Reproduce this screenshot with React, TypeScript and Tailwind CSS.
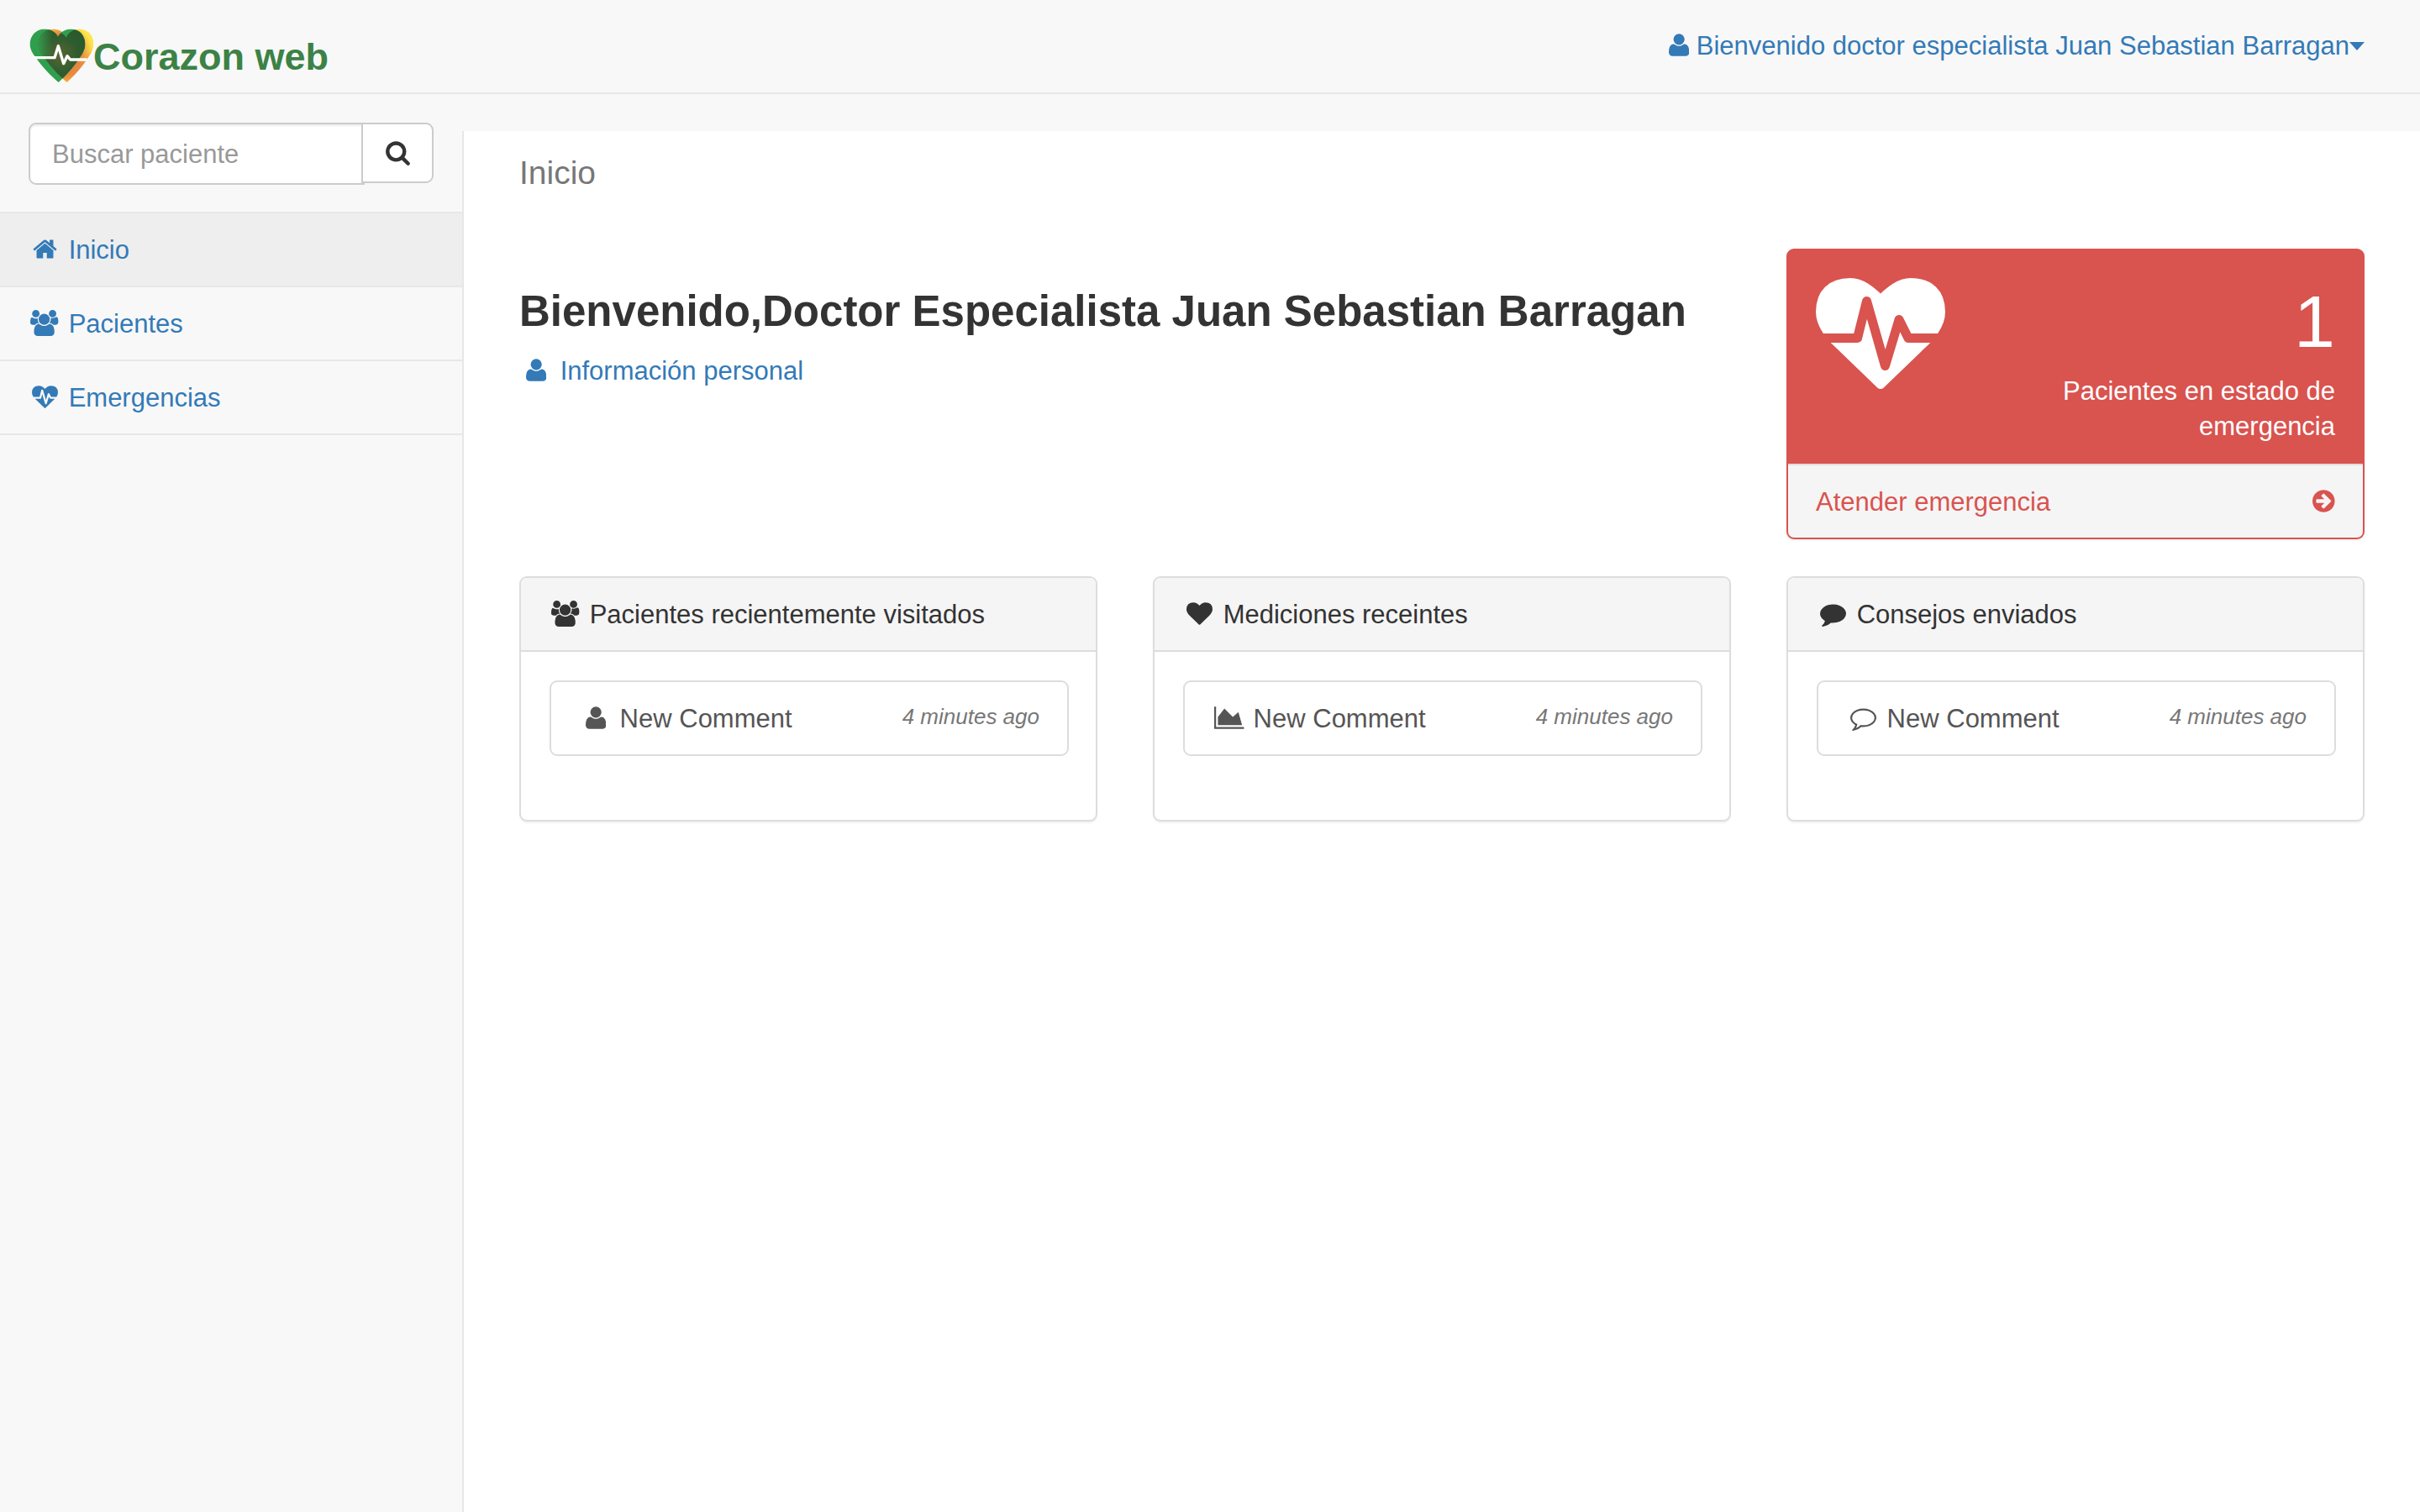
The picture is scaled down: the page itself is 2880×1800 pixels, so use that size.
import type { ReactNode } from "react";

type IconProps = { size?: string };

type GlyphProps = { width: number; d: string; size?: string; flip?: boolean };

function Glyph({ width, d, size = "h-[31px] align-[-4px]", flip }: GlyphProps) {
  return (
    <svg
      viewBox={`0 0 ${width} 1792`}
      className={`inline-block w-auto fill-current ${size}`}
      aria-hidden="true"
    >
      <path d={d} transform={flip ? "translate(0 1536) scale(1 -1)" : undefined} />
    </svg>
  );
}

function UserIcon() {
  return (
    <Glyph
      width={1408}
      flip
      d="M1408 131q0-120-73-189.5t-194-69.5h-874q-121 0-194 69.5t-73 189.5q0 53 3.5 103.5t14 109t26.5 108.5t43 97.5t62 81t85.5 53.5t111.5 20q9 0 42-21.5t74.5-48t108-48t133.5-21.5t133.5 21.5t108 48t74.5 48t42 21.5q61 0 111.5-20t85.5-53.5t62-81t43-97.5t26.5-108.5t14-109t3.5-103.5zM1088 1024q0-159-112.5-271.5t-271.5-112.5t-271.5 112.5t-112.5 271.5t112.5 271.5t271.5 112.5t271.5-112.5t112.5-271.5z"
    />
  );
}

function HomeIcon() {
  return (
    <Glyph
      width={1792}
      d="M1472 992v480q0 26-19 45t-45 19h-384v-384h-256v384h-384q-26 0-45-19t-19-45v-480q0-1 .5-3t.5-3l575-474 575 474q1 2 1 6zm223-69l-62 74q-8 9-21 11h-3q-13 0-21-7l-692-577-692 577q-12 8-24 7-13-2-21-11l-62-74q-8-10-7-23.5t11-21.5l719-599q32-26 76-26t76 26l244 204v-195q0-14 9-23t23-9h192q14 0 23 9t9 23v408l219 182q10 8 11 21.5t-7 23.5z"
    />
  );
}

function UsersIcon() {
  return (
    <Glyph
      width={1920}
      d="M593 896q-162 5-265 128h-134q-82 0-138-40.5t-56-118.5q0-353 124-353 6 0 43.5 21t97.5 42.5 119 21.5q67 0 133-23-5 37-5 66 0 159 93 293zm1071 637q0 120-73 189.5t-194 69.5h-874q-121 0-194-69.5t-73-189.5q0-53 3.5-103.5t14-109 26.5-108.5 43-97.5 62-81 85.5-53.5 111.5-20q10 0 43 21.5t73 48 107 48 135 21.5 135-21.5 107-48 73-48 43-21.5q61 0 111.5 20t85.5 53.5 62 81 43 97.5 26.5 108.5 14 109 3.5 103.5zm-1024-1277q0 106-75 181t-181 75-181-75-75-181 75-181 181-75 181 75 75 181zm704 384q0 159-112.5 271.5t-271.5 112.5-271.5-112.5-112.5-271.5 112.5-271.5 271.5-112.5 271.5 112.5 112.5 271.5zm576 225q0 78-56 118.5t-138 40.5h-134q-103-123-265-128 93-134 93-293 0-29-5-66 66 23 133 23 59 0 119-21.5t97.5-42.5 43.5-21q124 0 124 353zm-128-609q0 106-75 181t-181 75-181-75-75-181 75-181 181-75 181 75 75 181z"
    />
  );
}

function HeartbeatIcon({ size }: IconProps) {
  return (
    <Glyph
      width={1792}
      size={size}
      d="M1280 1024h305q-5 6-10 10.5t-9 7.5l-3 4-623 600q-18 18-44 18t-44-18l-624-602q-5-2-21-20h369q22 0 39.5-13.5t22.5-34.5l70-281 190 667q6 20 23 33t39 13q21 0 38-13t23-33l146-485 56 112q18 35 57 35zm512-428q0 145-103 300h-369l-111-221q-8-17-25.5-27t-36.5-8q-45 5-56 46l-129 430-196-686q-6-20-23.5-33t-39.5-13-39 13.5-22 34.5l-116 464h-423q-103-155-103-300 0-220 127-344t351-124q62 0 126.5 21.5t120 58 95.5 68.5 76 68q36-36 76-68t95.5-68.5 120-58 126.5-21.5q224 0 351 124t127 344z"
    />
  );
}

function HeartIcon() {
  return (
    <Glyph
      width={1792}
      d="M896 1664q-26 0-44-18l-624-602q-10-8-27.5-26t-55.5-65.5-68-97.5-53.5-121-23.5-138q0-220 127-344t351-124q62 0 126.5 21.5t120 58 95.5 68.5 76 68q36-36 76-68t95.5-68.5 120-58 126.5-21.5q224 0 351 124t127 344q0 221-229 450l-623 600q-18 18-44 18z"
    />
  );
}

function SearchIcon() {
  return (
    <Glyph
      width={1792}
      size="h-[31px]"
      d="M1216 832q0-185-131.5-316.5t-316.5-131.5-316.5 131.5-131.5 316.5 131.5 316.5 316.5 131.5 316.5-131.5 131.5-316.5zm512 832q0 52-38 90t-90 38q-54 0-90-38l-343-342q-179 124-399 124-143 0-273.5-55.5t-225-150-150-225-55.5-273.5 55.5-273.5 150-225 225-150 273.5-55.5 273.5 55.5 225 150 150 225 55.5 273.5q0 220-124 399l343 343q37 37 37 90z"
    />
  );
}

function CommentIcon() {
  return (
    <Glyph
      width={1792}
      d="M1792 896q0 174-120 321.5t-326 233-450 85.5q-70 0-145-8-198 175-460 242-49 14-114 22-17 2-30.5-9t-17.5-29v-1q-3-4-.5-12t2-10 4.5-9.5l6-9 7-8.5 8-9q7-8 31-34.5t34.5-38 31-39.5 32.5-51 27-59 26-76q-157-89-247.5-220t-90.5-281q0-130 71-248.5t191-204.5 286-136.5 348-50.5q244 0 450 85.5t326 233 120 321.5z"
    />
  );
}

function CommentOutlineIcon() {
  return (
    <Glyph
      width={1792}
      d="M896 384q-204 0-381.5 69.5t-282 187.5-104.5 255q0 112 71.5 213.5t201.5 175.5l87 50-27 96q-24 91-70 172 152-63 275-171l43-38 57 6q69 8 130 8 204 0 381.5-69.5t282-187.5 104.5-255-104.5-255-282-187.5-381.5-69.5zm896 512q0 174-120 321.5t-326 233-450 85.5q-70 0-145-8-198 175-460 242-49 14-114 22h-5q-15 0-27-10.5t-16-27.5v-1q-3-4-.5-12t2-10 4.5-9.5l6-9 7-8.5 8-9q7-8 31-34.5t34.5-38 31-39.5 32.5-51 27-59 26-76q-157-89-247.5-220t-90.5-281q0-174 120-321.5t326-233 450-85.5 450 85.5 326 233 120 321.5z"
    />
  );
}

function AreaChartIcon() {
  return (
    <Glyph
      width={2048}
      d="M2048 1536v128h-2048v-1536h128v1408h1920zm-384-1024l256 896h-1664v-576l448-576 576 576z"
    />
  );
}

function ArrowCircleIcon() {
  return (
    <Glyph
      width={1536}
      flip
      d="M1285 640q0 27-18 45l-91 91l-362 362q-18 18-45 18t-45-18l-91-91q-18-18-18-45t18-45l189-189h-502q-26 0-45-19t-19-45v-128q0-26 19-45t45-19h502l-189-189q-19-19-19-45t19-45l91-91q18-18 45-18t45 18l362 362l91 91q18 18 18 45zM1536 640q0-209-103-385.5t-279.5-279.5t-385.5-103t-385.5 103t-279.5 279.5t-103 385.5t103 385.5t279.5 279.5t385.5 103t385.5-103t279.5-279.5t103-385.5z"
    />
  );
}

function Logo() {
  const heart =
    "M148 72C138 52 118 45 99 45C70 45 48 68 48 98C48 118 58 133 70 148C90 178 120 209 150 235C178 209 206 178 225 148C238 130 245 116 245 98C245 66 224 45 195 45C175 45 158 54 148 72Z";
  return (
    <svg viewBox="46 43 228 192" className="h-16 w-[76px] shrink-0" aria-hidden="true">
      <defs>
        <linearGradient id="warm" x1="0.5" y1="0" x2="0.5" y2="1">
          <stop offset="0" stopColor="#ffe84a" />
          <stop offset="0.4" stopColor="#fde04b" />
          <stop offset="0.65" stopColor="#ee9f45" />
          <stop offset="0.85" stopColor="#e9983f" />
          <stop offset="1" stopColor="#fbd23c" />
        </linearGradient>
        <radialGradient id="warmEdge" gradientUnits="userSpaceOnUse" cx="125" cy="135" r="118">
          <stop offset="0.6" stopColor="#e58640" />
          <stop offset="1" stopColor="#e58640" stopOpacity="0" />
        </radialGradient>
        <radialGradient id="shade" gradientUnits="userSpaceOnUse" cx="126" cy="138" r="92">
          <stop offset="0" stopColor="#5b6532" />
          <stop offset="0.7" stopColor="#2e5c2f" />
          <stop offset="1" stopColor="#2a5a2d" />
        </radialGradient>
        <linearGradient id="blend" gradientUnits="userSpaceOnUse" x1="78" y1="0" x2="130" y2="0">
          <stop offset="0" stopColor="#38984a" />
          <stop offset="1" stopColor="#38984a" stopOpacity="0" />
        </linearGradient>
        <clipPath id="front">
          <path d={heart} />
        </clipPath>
        <clipPath id="back">
          <path d={heart} transform="translate(30 0)" />
        </clipPath>
      </defs>
      <g transform="translate(30 0)">
        <path d={heart} fill="url(#warm)" />
        <path d={heart} fill="url(#warmEdge)" />
      </g>
      <path d={heart} fill="#2f9f4e" />
      <g clipPath="url(#front)">
        <path d={heart} transform="translate(30 0)" fill="url(#shade)" />
        <g clipPath="url(#back)">
          <rect x="46" y="43" width="110" height="105" fill="url(#blend)" />
        </g>
        <path d="M158 60C168 50 180 45 196 45C186 52 181 62 178 76C173 67 167 61 158 60Z" fill="#2f9f4e" />
      </g>
      <path
        d="M62 147H136L149 105L168 168L181 141L192 154H252"
        fill="none"
        stroke="#ffffff"
        strokeWidth="10"
        strokeLinejoin="round"
      />
    </svg>
  );
}

function FixedIcon({ children }: { children: ReactNode }) {
  return <span className="inline-block w-10 text-center">{children}</span>;
}

function SideLink({ icon, label, active }: { icon: ReactNode; label: string; active?: boolean }) {
  return (
    <li className="border-b-2 border-[#e7e7e7]">
      <a
        href="#"
        aria-current={active ? "page" : undefined}
        className={`block px-[33px] pt-[23px] pb-[21px] text-[#337ab7] ${active ? "bg-[#eeeeee]" : ""}`}
      >
        <FixedIcon>{icon}</FixedIcon> {label}
      </a>
    </li>
  );
}

function Panel({ icon, title, itemIcon }: { icon: ReactNode; title: string; itemIcon: ReactNode }) {
  return (
    <section className="overflow-hidden rounded-[9px] border-2 border-[#dddddd] bg-white shadow-[0_2px_2px_rgba(0,0,0,0.05)]">
      <h2 className="border-b-2 border-[#dddddd] bg-[#f5f5f5] px-[33px] pt-[23px] pb-[21px] text-[#333333]">
        <FixedIcon>{icon}</FixedIcon> {title}
      </h2>
      <div className="pt-[34px] pr-8 pb-[76px] pl-[34px]">
        <a
          href="#"
          className="flex items-start justify-between rounded-[9px] border-2 border-[#dddddd] px-[33px] pt-[23px] pb-[21px] text-[#555555]"
        >
          <span>
            <FixedIcon>{itemIcon}</FixedIcon> New Comment
          </span>
          <em className="text-[26px] leading-[36px] text-[#777777]">4 minutes ago</em>
        </a>
      </div>
    </section>
  );
}

export default function App() {
  return (
    <div className="flex min-h-screen flex-col bg-[#f8f8f8] font-['Liberation_Sans',Arial,sans-serif] text-[31px] leading-[42px] text-[#333333]">
      <header className="flex items-start justify-between border-b-2 border-[#e7e7e7] pr-[66px] pl-[35px]">
        <a href="#" className="flex items-start pt-[34px] pb-2 text-[45px] leading-[68px] font-bold text-[#3c8246]">
          <Logo />
          <span>Corazon web</span>
        </a>
        <button type="button" className="pt-[34px] text-[#337ab7]">
          <UserIcon /> Bienvenido doctor especialista Juan Sebastian Barragan
          <svg viewBox="0 0 18 10" className="inline-block h-[10px] w-[18px] fill-current align-[5px]" aria-hidden="true">
            <path d="M0 0H18L9 10Z" />
          </svg>
        </button>
      </header>

      <div className="flex grow">
        <nav className="w-[550px] shrink-0">
          <form role="search" className="flex items-start border-b-2 border-[#e7e7e7] px-[34px] pt-[34px] pb-8">
            <input
              type="text"
              aria-label="Buscar paciente"
              placeholder="Buscar paciente"
              className="h-[74px] min-w-0 grow rounded-l-[9px] border-2 border-[#cccccc] bg-white px-[26px] pt-[2px] shadow-[inset_0_2px_2px_rgba(0,0,0,0.075)] placeholder:text-[#999999]"
            />
            <button
              type="button"
              aria-label="Buscar"
              className="relative -ml-1 flex h-[72px] w-[86px] shrink-0 items-center justify-center rounded-r-[9px] border-2 border-[#cccccc] bg-white pb-[2px] text-[#333333]"
            >
              <SearchIcon />
            </button>
          </form>
          <ul>
            <SideLink icon={<HomeIcon />} label="Inicio" active />
            <SideLink icon={<UsersIcon />} label="Pacientes" />
            <SideLink icon={<HeartbeatIcon />} label="Emergencias" />
          </ul>
        </nav>

        <main className="mt-11 min-w-0 grow border-l-2 border-[#e7e7e7] bg-white px-[66px] pt-7">
          <p className="mb-[68px] text-[39px] leading-[44px] text-[#777777]">Inicio</p>

          <div className="mb-11 grid grid-cols-3 gap-x-[66px]">
            <div className="col-span-2 pt-[46px]">
              <h1 className="mb-[21px] text-[51px] leading-[58px] font-bold whitespace-nowrap">
                Bienvenido,Doctor Especialista Juan Sebastian Barragan
              </h1>
              <a href="#" className="text-[#337ab7]">
                <FixedIcon>
                  <UserIcon />
                </FixedIcon>{" "}
                Información personal
              </a>
            </div>

            <section className="overflow-hidden rounded-[9px] border-2 border-[#d9534f] bg-[#d9534f] shadow-[0_2px_2px_rgba(0,0,0,0.05)]">
              <div className="flex items-start justify-between px-[33px] pt-[22px] pb-[23px] text-white">
                <HeartbeatIcon size="h-[154px] shrink-0" />
                <div className="w-1/2 grow pt-px pl-[66px] text-right">
                  <div className="text-[88px] leading-[124px]">1</div>
                  <div className="ml-auto max-w-[400px]">Pacientes en estado de emergencia</div>
                </div>
              </div>
              <a
                href="#"
                className="flex items-start justify-between border-t-2 border-[#dddddd] bg-[#f5f5f5] px-[33px] pt-[23px] pb-[21px] text-[#d9534f]"
              >
                <span>Atender emergencia</span>
                <span>
                  <ArrowCircleIcon />
                </span>
              </a>
            </section>
          </div>

          <div className="grid grid-cols-3 gap-x-[66px]">
            <Panel icon={<UsersIcon />} title="Pacientes recientemente visitados" itemIcon={<UserIcon />} />
            <Panel icon={<HeartIcon />} title="Mediciones receintes" itemIcon={<AreaChartIcon />} />
            <Panel icon={<CommentIcon />} title="Consejos enviados" itemIcon={<CommentOutlineIcon />} />
          </div>
        </main>
      </div>
    </div>
  );
}
